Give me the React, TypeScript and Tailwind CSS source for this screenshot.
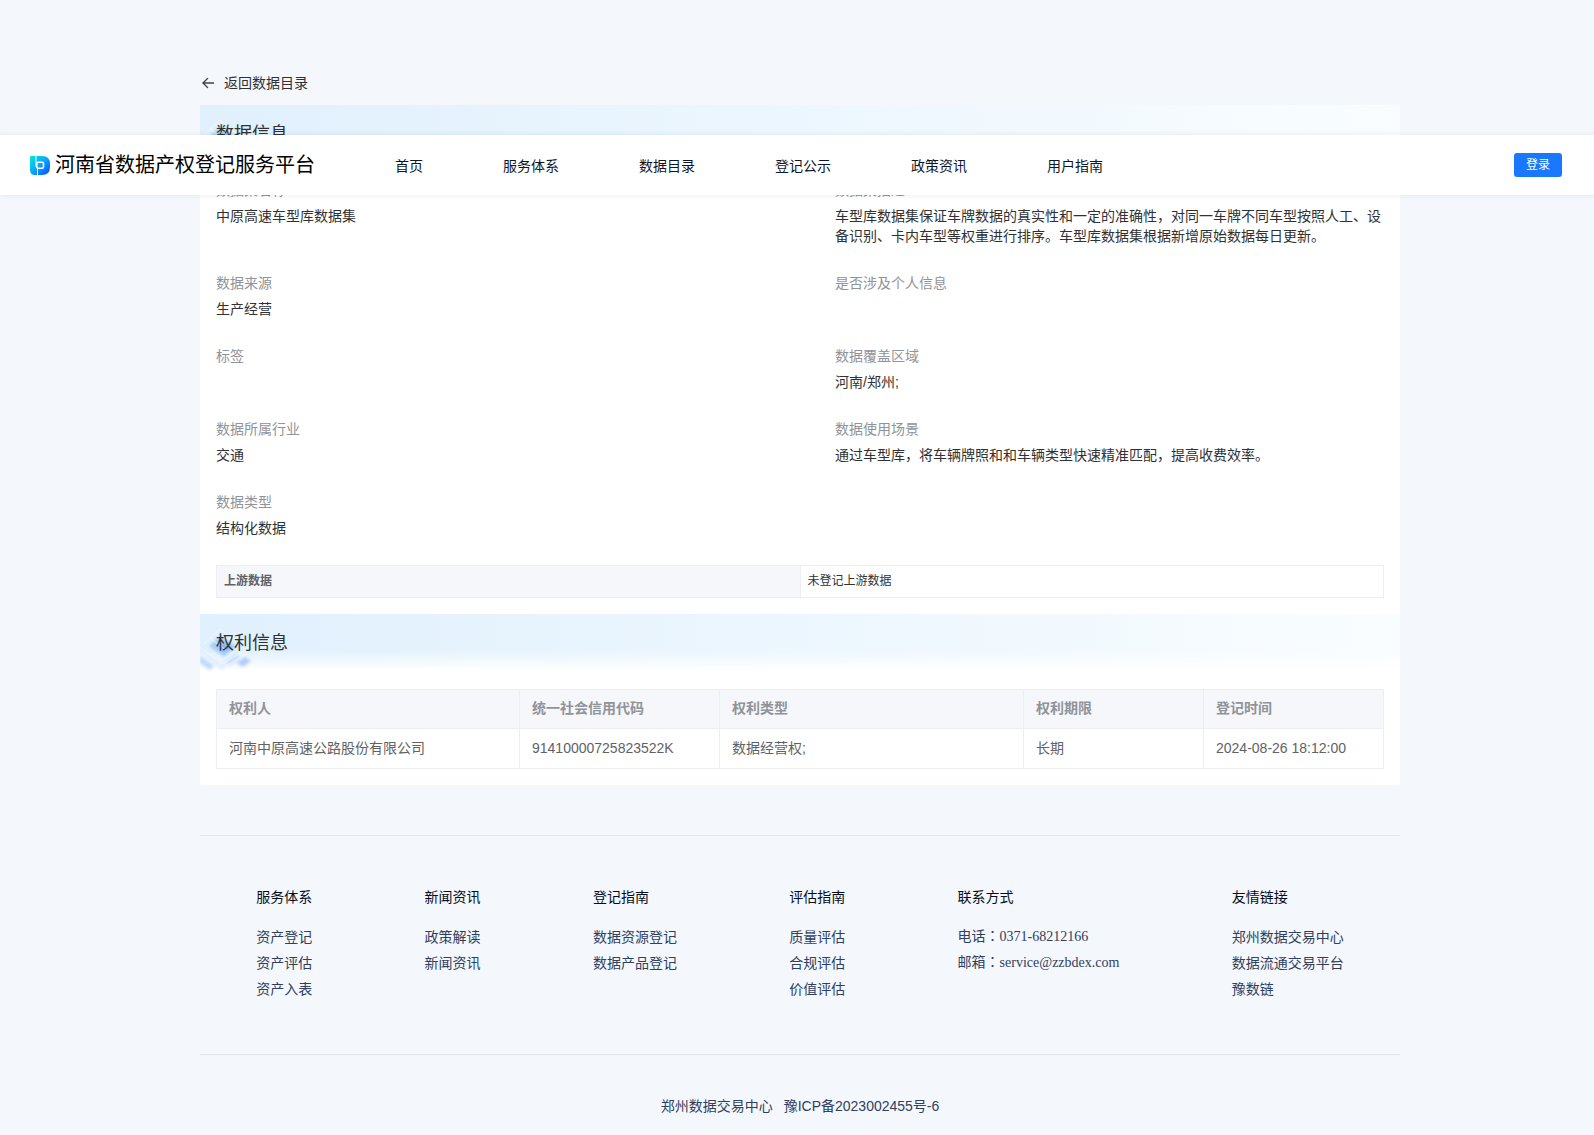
import { ReactNode } from "react";

const navItems = ["首页", "服务体系", "数据目录", "登记公示", "政策资讯", "用户指南"];

const details = [
  { label: "数据集名称", value: "中原高速车型库数据集" },
  {
    label: "数据集描述",
    value:
      "车型库数据集保证车牌数据的真实性和一定的准确性，对同一车牌不同车型按照人工、设备识别、卡内车型等权重进行排序。车型库数据集根据新增原始数据每日更新。",
  },
  { label: "数据来源", value: "生产经营" },
  { label: "是否涉及个人信息", value: "" },
  { label: "标签", value: "" },
  { label: "数据覆盖区域", value: "河南/郑州;" },
  { label: "数据所属行业", value: "交通" },
  { label: "数据使用场景", value: "通过车型库，将车辆牌照和和车辆类型快速精准匹配，提高收费效率。" },
  { label: "数据类型", value: "结构化数据" },
];

const rightsColumns = ["权利人", "统一社会信用代码", "权利类型", "权利期限", "登记时间"];

const rightsRows = [
  ["河南中原高速公路股份有限公司", "91410000725823522K", "数据经营权;", "长期", "2024-08-26 18:12:00"],
];

const footerColumns = [
  { title: "服务体系", links: ["资产登记", "资产评估", "资产入表"] },
  { title: "新闻资讯", links: ["政策解读", "新闻资讯"] },
  { title: "登记指南", links: ["数据资源登记", "数据产品登记"] },
  { title: "评估指南", links: ["质量评估", "合规评估", "价值评估"] },
  { title: "联系方式", contacts: ["电话：0371-68212166", "邮箱：service@zzbdex.com"] },
  { title: "友情链接", links: ["郑州数据交易中心", "数据流通交易平台", "豫数链"] },
];

const Logo = () => (
  <svg viewBox="0 0 20 19" className="w-5 h-[19px]" aria-hidden="true">
    <defs>
      <linearGradient id="logo" x1="0" y1="0" x2="1" y2="1">
        <stop offset="0" stopColor="#00ecdc" />
        <stop offset="0.5" stopColor="#08a4fb" />
        <stop offset="1" stopColor="#0a48ff" />
      </linearGradient>
    </defs>
    <path d="M1 0H12Q20 0 20 8V11Q20 19 12 19H5Q0 19 0 14V1Q0 0 1 0Z" fill="url(#logo)" />
    <path d="M6 0V11" stroke="#fff" strokeWidth="1" />
    <path d="M7.500 13V19" stroke="#fff" strokeWidth="1" />
    <rect x="6.750" y="6.250" width="6.750" height="6" rx="1.500" fill="none" stroke="#fff" strokeWidth="1.600" />
  </svg>
);

const Cubes = () => (
  <svg viewBox="0 0 56 60" className="absolute left-0 top-0 w-14 h-[60px]" aria-hidden="true">
    <defs>
      <filter id="soft" x="-20%" y="-20%" width="140%" height="140%">
        <feGaussianBlur stdDeviation="1.5" />
      </filter>
    </defs>
    <g filter="url(#soft)">
      <path d="M9 32L20 22L36 32L24 43Z" fill="#8fbdf8" opacity="0.7" />
      <path d="M18 31L28 29L32 35L22 38Z" fill="#6ea5f5" opacity="0.6" />
      <path d="M6 36L20 48L38 38V44L22 56L6 44Z" fill="#e3effe" />
      <path d="M0 42L14 52L10 56L0 49Z" fill="#a9cbfa" opacity="0.7" />
      <path d="M36 49L45 43L51 47L43 53Z" fill="#98bbf8" opacity="0.7" />
      <path d="M26 47L36 40L41 43L30 52Z" fill="#c3dbfc" opacity="0.8" />
    </g>
    <path
      d="M4 30L20 15L36 28M0 33L22 50L42 38M10 24L26 36M26 52L46 40"
      fill="none"
      stroke="#fff"
      opacity="0.5"
    />
  </svg>
);

const SectionHeader = ({ children }: { children: ReactNode }) => (
  <div className="relative h-[60px] bg-linear-to-r from-[#e0f0fd] to-[#f9fdff]">
    <div className="h-full bg-linear-to-b from-transparent from-60% to-white to-95%">
      <Cubes />
      <h2 className="relative px-4 pt-[15px] text-lg leading-7 text-[#303133]">{children}</h2>
    </div>
  </div>
);

const Header = () => (
  <header className="absolute inset-x-0 top-[135px] z-10 flex h-[60px] items-center bg-white pl-[30px] pr-[38px] shadow-[0_0_6px_rgba(0,0,0,0.08)]">
    <a href="#" className="flex items-center gap-[5px] text-xl leading-7 text-black">
      <Logo />
      河南省数据产权登记服务平台
    </a>
    <nav className="ml-20 flex gap-20 pt-[2px] text-sm text-[#0c1628]">
      {navItems.map((item) => (
        <a href="#" key={item}>
          {item}
        </a>
      ))}
    </nav>
    <button className="ml-auto h-6 w-12 rounded-[3px] bg-[#1a78ff] pb-px text-xs text-white">登录</button>
  </header>
);

const Footer = () => (
  <footer className="mt-[50px] text-sm text-[#2f3f5e]">
    <div className="flex h-[220px] justify-around border-y border-[#e1e5eb] pt-[51px]">
      {footerColumns.map(({ title, links, contacts }) => (
        <div key={title}>
          <h3 className="mb-[17px] leading-5 text-[#060d18]">{title}</h3>
          <ul className="leading-[26px]">
            {links?.map((link) => (
              <li key={link}>
                <a href="#">{link}</a>
              </li>
            ))}
            {contacts?.map((contact) => (
              <li key={contact} lang="zh-TW" className="font-['Liberation_Serif','Noto_Sans_CJK_TC',serif]">
                {contact}
              </li>
            ))}
          </ul>
        </div>
      ))}
    </div>
    <p className="flex justify-center gap-[11px] pt-[41px] pb-[19px] leading-5">
      <span>郑州数据交易中心</span>
      <a href="#">豫ICP备2023002455号-6</a>
    </p>
  </footer>
);

const App = () => {
  return (
    <div lang="zh-CN" className="overflow-x-hidden">
      <div className="relative min-w-[1600px] bg-[#f4f7fc] font-['Liberation_Sans','Noto_Sans_CJK_SC',sans-serif]">
        <Header />
        <div className="mx-auto w-[1200px] pt-[73px]">
          <a href="#" className="mb-3 flex w-fit items-center gap-2 text-sm text-[#303133]">
            <svg
              viewBox="0 0 1024 1024"
              className="size-4"
              fill="currentColor"
              stroke="currentColor"
              strokeWidth="24"
              aria-hidden="true"
            >
              <path d="M224 480h640a32 32 0 1 1 0 64H224a32 32 0 0 1 0-64" />
              <path d="m237.248 512 265.408 265.344a32 32 0 0 1-45.312 45.312l-288-288a32 32 0 0 1 0-45.312l288-288a32 32 0 1 1 45.312 45.312z" />
            </svg>
            返回数据目录
          </a>
          <main className="bg-white pb-4">
            <section className="pb-4">
              <SectionHeader>数据信息</SectionHeader>
              <dl className="grid grid-cols-2 gap-x-[70px] gap-y-[27px] px-4 pt-[15px] text-sm">
                {details.map(({ label, value }) => (
                  <div key={label}>
                    <dt className="mb-[6px] text-[#909399]">{label}</dt>
                    <dd className="min-h-5 text-[#303133]">{value}</dd>
                  </div>
                ))}
              </dl>
              <div className="mt-[27px] px-4">
                <table className="w-full table-fixed border-separate border-spacing-0 border-l border-t border-[#ebeef5] text-left text-xs">
                  <tbody>
                    <tr className="h-8">
                      <th className="border-b border-r border-[#ebeef5] bg-[#f5f7fa] px-[7px] pb-[2px] font-bold text-[#606266]">
                        上游数据
                      </th>
                      <td className="border-b border-r border-[#ebeef5] px-[7px] pb-[2px] text-[#303133]">
                        未登记上游数据
                      </td>
                    </tr>
                  </tbody>
                </table>
              </div>
            </section>
            <section>
              <SectionHeader>权利信息</SectionHeader>
              <div className="px-4 pt-[15px]">
                <table className="w-full table-fixed border-separate border-spacing-0 border-l border-t border-[#ebeef5] text-left text-sm">
                  <colgroup>
                    <col className="w-[303px]" />
                    <col className="w-[200px]" />
                    <col className="w-[304px]" />
                    <col className="w-[180px]" />
                    <col className="w-[180px]" />
                  </colgroup>
                  <thead>
                    <tr className="h-[39px]">
                      {rightsColumns.map((column) => (
                        <th
                          key={column}
                          className="border-b border-r border-[#ebeef5] bg-[#f5f7fa] px-3 pb-[2px] font-bold text-[#909399]"
                        >
                          {column}
                        </th>
                      ))}
                    </tr>
                  </thead>
                  <tbody>
                    {rightsRows.map((row) => (
                      <tr key={row[1]} className="h-10">
                        {row.map((cell) => (
                          <td key={cell} className="border-b border-r border-[#ebeef5] px-3 pb-[2px] text-[#606266]">
                            {cell}
                          </td>
                        ))}
                      </tr>
                    ))}
                  </tbody>
                </table>
              </div>
            </section>
          </main>
          <Footer />
        </div>
      </div>
    </div>
  );
};

export default App;
